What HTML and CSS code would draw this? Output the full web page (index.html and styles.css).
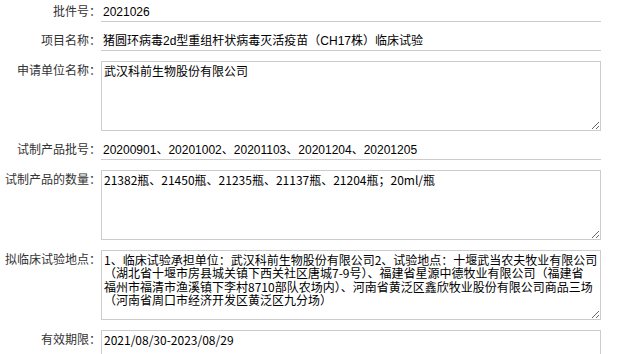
FILE: index.html
```html
<!DOCTYPE html>
<html lang="zh-CN">
<head>
  <meta charset="UTF-8" />
  <meta name="viewport" content="width=device-width, initial-scale=1.0" />
  <title>临床试验审批信息</title>
  <link rel="stylesheet" href="styles.css">
</head>
<body>
  <form class="detail-form">
    <div class="row">
      <label class="label">批件号：</label>
      <div class="field">2021026</div>
    </div>
    <div class="row">
      <label class="label">项目名称：</label>
      <div class="field">猪圆环病毒2d型重组杆状病毒灭活疫苗（CH17株）临床试验</div>
    </div>
    <div class="row">
      <label class="label label-box">申请单位名称：</label>
      <textarea class="box" readonly>武汉科前生物股份有限公司</textarea>
    </div>
    <div class="row">
      <label class="label">试制产品批号：</label>
      <div class="field">20200901、20201002、20201103、20201204、20201205</div>
    </div>
    <div class="row">
      <label class="label label-box">试制产品的数量：</label>
      <textarea class="box" readonly>21382瓶、21450瓶、21235瓶、21137瓶、21204瓶；20ml/瓶</textarea>
    </div>
    <div class="row">
      <label class="label label-box">拟临床试验地点：</label>
      <textarea class="box" readonly>1、临床试验承担单位：武汉科前生物股份有限公司2、试验地点：十堰武当农夫牧业有限公司
（湖北省十堰市房县城关镇下西关社区唐城7-9号）、福建省星源中德牧业有限公司（福建省
福州市福清市渔溪镇下李村8710部队农场内）、河南省黄泛区鑫欣牧业股份有限公司商品三场
（河南省周口市经济开发区黄泛区九分场）</textarea>
    </div>
    <div class="row">
      <label class="label label-box">有效期限：</label>
      <textarea class="box" readonly>2021/08/30-2023/08/29</textarea>
    </div>
  </form>
</body>
</html>
```

FILE: styles.css
```css
html {
  overflow: hidden;
}
body {
  margin: 0;
  padding-top: 3px;
  font-family: "Liberation Sans", "Noto Sans CJK SC", sans-serif;
  font-size: 12px;
  color: #333;
  background: #fff;
}
.detail-form {
  display: flex;
  flex-direction: column;
  gap: 10px;
}
.row {
  display: flex;
  align-items: flex-start;
}
.label {
  flex: none;
  width: 101px;
  text-align: right;
  line-height: 18px;
  white-space: nowrap;
}
.label-box {
  padding-top: 1px;
}
.field {
  box-sizing: border-box;
  width: 500px;
  height: 19px;
  padding-left: 2px;
  line-height: 18px;
  color: #000;
  border-bottom: 1px solid #ccc;
  white-space: nowrap;
}
.box {
  box-sizing: border-box;
  width: 500px;
  height: 70px;
  margin: 0;
  padding: 2px;
  border: 1px solid #ccc;
  font-family: "Noto Sans CJK SC", monospace;
  font-size: 12px;
  line-height: 13.4px;
  color: #000;
  background: #fff;
  outline: none;
}
```
